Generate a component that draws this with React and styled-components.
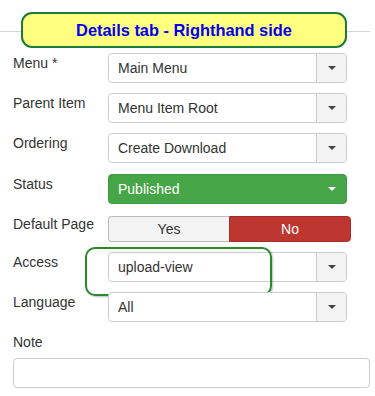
import styled, { createGlobalStyle } from "styled-components";

const GlobalStyle = createGlobalStyle`
  body {
    margin: 0;
    background: #fff;
    font-family: "Liberation Sans", Arial, sans-serif;
    color: #333;
  }
`;

const Page = styled.div`
  width: 375px;
  height: 396px;
  padding: 0 5px 0 13px;
  box-sizing: border-box;
  overflow: hidden;
`;

const Header = styled.div`
  position: relative;
  padding: 12px 0 5px 8px;

  &::before {
    content: "";
    position: absolute;
    left: -13px;
    right: 0;
    top: 31px;
    height: 1px;
    background: #d8d8d8;
  }
`;

const Callout = styled.div`
  position: relative;
  width: 326px;
  height: 36px;
  box-sizing: border-box;
  border: 2px solid #1f7a3c;
  border-radius: 11px;
  background: #ffff80;
  display: flex;
  align-items: center;
  justify-content: center;
  color: #0000f0;
  font-weight: bold;
  font-size: 16.4px;
`;

const Row = styled.div`
  display: flex;
  align-items: flex-start;
  margin-bottom: ${({ $mb }) => $mb || 10}px;
`;

const Label = styled.div`
  width: 95px;
  flex: none;
  font-size: 14px;
  line-height: 20px;
  color: #333;
`;

const Select = styled.div`
  position: relative;
  width: 239px;
  height: 30px;
  box-sizing: border-box;
  display: flex;
  align-items: stretch;
  border: 1px solid ${({ $green }) => ($green ? "#3f9a3f" : "#ccc")};
  border-radius: 4px;
  background: ${({ $green }) => ($green ? "#46a546" : "#fff")};
  color: ${({ $green }) => ($green ? "#fff" : "#333")};
  font-size: 14px;
  overflow: hidden;
`;

const Value = styled.div`
  flex: 1;
  display: flex;
  align-items: center;
  padding-left: 9px;
`;

const Trigger = styled.div`
  width: 29px;
  flex: none;
  display: flex;
  align-items: center;
  justify-content: center;
  border-left: 1px solid ${({ $green }) => ($green ? "#46a546" : "#ccc")};
  background: ${({ $green }) => ($green ? "#46a546" : "#f3f3f3")};
`;

const Caret = styled.span`
  width: 0;
  height: 0;
  border-left: 4px solid transparent;
  border-right: 4px solid transparent;
  border-top: 4px solid ${({ $light }) => ($light ? "#fff" : "#444")};
`;

const Toggle = styled.div`
  display: flex;
  width: 243px;
  height: 26px;
  margin-top: 2px;
`;

const ToggleButton = styled.div`
  flex: 1;
  display: flex;
  align-items: center;
  justify-content: center;
  font-size: 14px;
  box-sizing: border-box;
  border: 1px solid ${({ $active }) => ($active ? "#a32f29" : "#bbb")};
  background: ${({ $active }) => ($active ? "#bd362f" : "#f3f3f3")};
  color: ${({ $active }) => ($active ? "#fff" : "#333")};
  border-radius: ${({ $first }) => ($first ? "4px 0 0 4px" : "0 4px 4px 0")};
  ${({ $first }) => ($first ? "border-right: none;" : "")}
`;

const Highlight = styled.div`
  position: absolute;
  left: -23px;
  top: -5px;
  width: 187px;
  height: 49px;
  box-sizing: border-box;
  border: 2px solid #2a8a2a;
  border-radius: 10px;
  box-shadow: 1px 1px 2px rgba(0, 0, 0, 0.25);
  pointer-events: none;
`;

const AccessWrap = styled.div`
  position: relative;
`;

const NoteLabel = styled.div`
  font-size: 14px;
  line-height: 20px;
  margin: 9px 0 6px;
`;

const NoteInput = styled.div`
  width: 357px;
  height: 30px;
  box-sizing: border-box;
  border: 1px solid #ccc;
  border-radius: 4px;
  background: #fff;
`;

function Dropdown({ value, green }) {
  return (
    <Select $green={green}>
      <Value>{value}</Value>
      <Trigger $green={green}>
        <Caret $light={green} />
      </Trigger>
    </Select>
  );
}

export default function App() {
  return (
    <>
      <GlobalStyle />
      <Page>
        <Header>
          <Callout>Details tab - Righthand side</Callout>
        </Header>

        <Row>
          <Label>Menu *</Label>
          <Dropdown value="Main Menu" />
        </Row>
        <Row>
          <Label>Parent Item</Label>
          <Dropdown value="Menu Item Root" />
        </Row>
        <Row $mb={11}>
          <Label>Ordering</Label>
          <Dropdown value="Create Download" />
        </Row>
        <Row $mb={10}>
          <Label>Status</Label>
          <Dropdown value="Published" green />
        </Row>
        <Row>
          <Label>Default Page</Label>
          <Toggle>
            <ToggleButton $first>Yes</ToggleButton>
            <ToggleButton $active>No</ToggleButton>
          </Toggle>
        </Row>
        <Row>
          <Label>Access</Label>
          <AccessWrap>
            <Dropdown value="upload-view" />
            <Highlight />
          </AccessWrap>
        </Row>
        <Row $mb={0}>
          <Label>Language</Label>
          <Dropdown value="All" />
        </Row>

        <NoteLabel>Note</NoteLabel>
        <NoteInput />
      </Page>
    </>
  );
}
